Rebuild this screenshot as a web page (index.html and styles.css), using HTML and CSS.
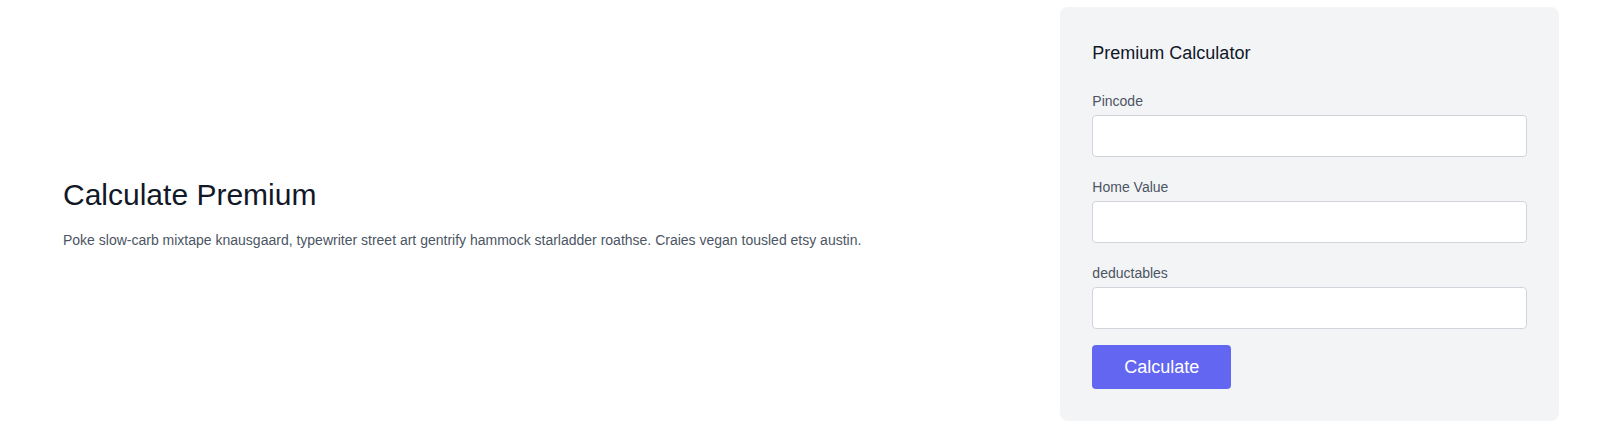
FILE: index.html
```html
<!DOCTYPE html>
<html lang="en">
<head>
<meta charset="utf-8">
<title>Calculate Premium</title>
<link rel="stylesheet" href="styles.css">
</head>
<body>
<section class="section">
  <div class="container">
    <div class="intro">
      <h1 class="intro-title">Calculate Premium</h1>
      <p class="intro-text">Poke slow-carb mixtape knausgaard, typewriter street art gentrify hammock starladder roathse. Craies vegan tousled etsy austin.</p>
    </div>
    <form class="card">
      <h2 class="card-title">Premium Calculator</h2>
      <div class="field">
        <label class="field-label" for="pincode">Pincode</label>
        <input class="field-input" type="text" id="pincode" name="pincode">
      </div>
      <div class="field">
        <label class="field-label" for="home-value">Home Value</label>
        <input class="field-input" type="text" id="home-value" name="home-value">
      </div>
      <div class="field">
        <label class="field-label" for="deductables">deductables</label>
        <input class="field-input" type="text" id="deductables" name="deductables">
      </div>
      <div class="actions">
        <button class="btn" type="button">Calculate</button>
      </div>
    </form>
  </div>
</section>
</body>
</html>
```

FILE: styles.css
```css
* {
  box-sizing: border-box;
}

html, body {
  margin: 0;
  padding: 0;
  background: #ffffff;
  font-family: "Liberation Sans", Arial, sans-serif;
}

.section {
  padding: 7px 0 0 63px;
}

.container {
  width: 1496px;
  display: flex;
  align-items: center;
}

.intro {
  width: 60%;
}

.intro-title {
  margin: 0;
  font-size: 30px;
  line-height: 36px;
  font-weight: 400;
  color: #111827;
}

.intro-text {
  margin: 16px 0 0;
  font-size: 14px;
  line-height: 23px;
  color: #4b5563;
}

.card {
  width: 33.3333%;
  margin: 0 0 0 auto;
  background: #f3f4f6;
  border-radius: 8px;
  padding: 32px;
  display: flex;
  flex-direction: column;
}

.card-title {
  margin: 0 0 20px;
  font-size: 18px;
  line-height: 28px;
  font-weight: 400;
  color: #111827;
}

.field {
  display: flex;
  flex-direction: column;
  margin-bottom: 16px;
}

.field-label {
  font-size: 14px;
  line-height: 28px;
  color: #4b5563;
}

.field-input {
  width: 100%;
  height: 42px;
  background: #ffffff;
  border: 1px solid #d1d5db;
  border-radius: 4px;
  padding: 4px 12px;
  font-family: inherit;
  font-size: 16px;
  line-height: 32px;
  color: #374151;
  outline: none;
}

.actions {
  display: flex;
}

.btn {
  border: 0;
  border-radius: 4px;
  background: #6366f1;
  color: #ffffff;
  font-family: inherit;
  font-size: 18px;
  line-height: 28px;
  padding: 8px 32px;
  cursor: pointer;
}
```
